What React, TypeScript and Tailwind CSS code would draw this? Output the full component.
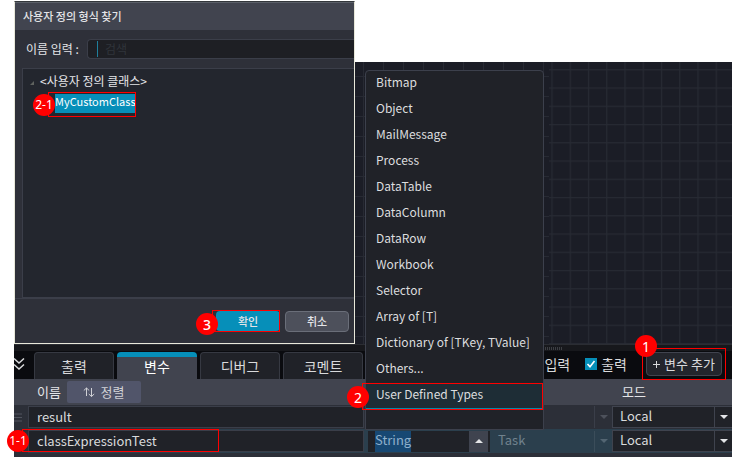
import { ReactNode } from "react";

const typeOptions = [
  "Bitmap",
  "Object",
  "MailMessage",
  "Process",
  "DataTable",
  "DataColumn",
  "DataRow",
  "Workbook",
  "Selector",
  "Array of [T]",
  "Dictionary of [TKey, TValue]",
  "Others...",
];

function Badge({ className, children }: { className: string; children: ReactNode }) {
  return (
    <span
      className={`absolute z-30 flex size-[22px] items-center justify-center rounded-full bg-[#ff0000] font-['Noto_Sans',sans-serif] text-white ${className}`}
    >
      {children}
    </span>
  );
}

function Frame({ className }: { className: string }) {
  return <span className={`pointer-events-none absolute z-20 border border-[#ff0000] ${className}`} />;
}

function CanvasGrid() {
  return (
    <svg className="absolute inset-0 size-full" aria-hidden="true">
      <defs>
        <pattern id="wide" x="8" y="14" width="20" height="20" patternUnits="userSpaceOnUse">
          <path d="M0.5 0V20M0 0.5H20" stroke="#272a33" fill="none" />
        </pattern>
        <pattern id="narrow" x="196.4" y="7.2" width="18.25" height="18.25" patternUnits="userSpaceOnUse">
          <path d="M0.6 0V18.25M0 0.6H18.25" stroke="#272a33" strokeWidth="1.2" fill="none" />
        </pattern>
      </defs>
      <rect width="194" height="100%" fill="url(#wide)" />
      <rect x="194" width="100%" height="100%" fill="url(#narrow)" />
    </svg>
  );
}

function Triangle({ up, className }: { up?: boolean; className: string }) {
  return (
    <svg viewBox="0 0 8 4" className={`h-1 w-2 ${className}`} aria-hidden="true">
      <path d={up ? "M0 4L4 0L8 4Z" : "M0 0H8L4 4Z"} fill="currentColor" />
    </svg>
  );
}

function Dialog() {
  return (
    <section className="mt-px flex h-[343px] w-[341px] shrink-0 flex-col border border-[#e8e8da] border-t-[#33373b] bg-[#2e3039] text-[#e4e5e8]">
      <h2 className="flex h-7 shrink-0 items-center border-t border-[#5b6069] bg-[#41444f] pl-2 text-[11px] font-medium">
        사용자 정의 형식 찾기
      </h2>
      <div className="flex h-[38px] shrink-0 items-center pl-[11px]">
        <label htmlFor="search" className="w-[61px] text-[12px]">
          이름 입력 :
        </label>
        <div className="flex h-5 flex-1 items-center rounded-l-sm border border-r-0 border-[#3b3e49] bg-[#1e1f24] pl-[9px]">
          <span className="h-4 w-px shrink-0 bg-[#1f7f9c]" />
          <input
            id="search"
            placeholder="검색"
            className="h-4 w-full min-w-0 pl-[7px] text-[12px] outline-none placeholder:text-[#30343b]"
          />
        </div>
      </div>
      <div className="ml-[7px] flex-1 border border-r-0 border-[#3b3e49] bg-[#23262e] pt-[3px] pl-[7px]">
        <div className="flex h-[18px] items-center gap-[6px] text-[12px]">
          <svg viewBox="0 0 4 4" className="mt-1 size-1" aria-hidden="true">
            <path d="M4 0V4H0Z" fill="#5f625f" />
          </svg>
          <span>&lt;사용자 정의 클래스&gt;</span>
        </div>
        <div className="relative mt-[2px] ml-[18px] h-[25px] w-[88px] pt-[2px]">
          <button className="ml-[7px] flex h-[19px] w-20 items-center bg-[#068fb9] pb-1 text-[11px] text-white">
            MyCustomClass
          </button>
          <Frame className="inset-0" />
          <Badge className="-left-[15px] top-[2px] text-[12px]">2-1</Badge>
        </div>
      </div>
      <div className="flex h-[45px] shrink-0 items-center justify-end gap-[5px] border-t border-[#3b3e49] pr-[5px] text-[11px] font-medium">
        <div className="relative">
          <button className="block h-5 w-16 rounded-sm bg-[#068fb9] leading-5">확인</button>
          <Frame className="-inset-y-px -left-1 right-0" />
          <Badge className="-left-5 top-[2px] text-[14px]">3</Badge>
        </div>
        <button className="h-[21px] w-16 rounded-sm border border-[#6a6e79] bg-[#4d505b] leading-[18px]">취소</button>
      </div>
    </section>
  );
}

function TypeMenu() {
  return (
    <div className="absolute left-[365px] top-[70px] z-10 h-[360px] w-[179px] rounded-t-sm border border-[#3c404c] bg-[#202228] text-[12px] text-[#dcdddf]">
      <ul>
        {typeOptions.map((name) => (
          <li key={name}>
            <button className="block h-[26px] w-full pb-1 pl-[10px] text-left leading-[22px]">{name}</button>
          </li>
        ))}
        <li className="relative">
          <button className="block h-[26px] w-full border-b border-[#0b86a8] bg-[#1e2d36] pb-[3px] pl-[10px] text-left leading-[22px]">
            User Defined Types
          </button>
          <Frame className="-left-1 right-0 top-0 -bottom-px" />
          <Badge className="-left-[19px] top-[3px] text-[14px]">2</Badge>
        </li>
      </ul>
    </div>
  );
}

function Tab({ label, active }: { label: string; active?: boolean }) {
  return (
    <button
      role="tab"
      aria-selected={!!active}
      className={
        active
          ? "h-[27px] w-20 rounded-t-sm border-t-[5px] border-[#068fb9] bg-[#41444f] pb-1 text-[14px] leading-[18px] text-white"
          : "h-[27px] w-20 rounded-t-sm border border-b-0 border-[#363942] bg-[#202228] text-[14px] leading-6 text-[#d9dadc]"
      }
    >
      {label}
    </button>
  );
}

function TabBar() {
  return (
    <div className="flex h-7 items-end bg-[#0a0b0f] pr-[10px]">
      <div className="flex flex-1 items-end gap-[3px]" role="tablist">
        <button aria-label="접기" className="mb-2 w-[17px]">
          <svg viewBox="0 0 11 14" className="h-[14px] w-[11px] fill-none stroke-[#d9dadc] stroke-[1.5]" aria-hidden="true">
            <path d="M0 1.5L5 6L10 1.5M0 7.5L5 12L10 7.5" />
          </svg>
        </button>
        <Tab label="출력" />
        <Tab label="변수" active />
        <Tab label="디버그" />
        <Tab label="코멘트" />
      </div>
      <div className="flex h-7 items-center pb-[2px] text-[14px] text-[#d9dadc]">
        <label className="mr-[15px] flex items-center gap-1">
          <input type="checkbox" defaultChecked className="size-3 appearance-none bg-[#068fb9]" />
          입력
        </label>
        <label className="flex items-center gap-1">
          <span className="relative flex">
            <input type="checkbox" defaultChecked className="size-3 appearance-none bg-[#068fb9]" />
            <svg viewBox="0 0 12 12" className="pointer-events-none absolute inset-0 size-3 fill-none stroke-white stroke-[1.6]" aria-hidden="true">
              <path d="M2.5 6L5 8.8L9.5 3" />
            </svg>
          </span>
          출력
        </label>
        <div className="relative ml-[19px]">
          <button className="flex h-6 w-[76px] items-center justify-center gap-1 whitespace-nowrap rounded-sm border border-[#41444f] bg-[#23252c] text-[13px]">
            <svg viewBox="0 0 7 7" className="size-[7px] stroke-[#d9dadc]" aria-hidden="true">
              <path d="M3.5 0V7M0 3.5H7" />
            </svg>
            변수 추가
          </button>
          <Frame className="-inset-x-1 -top-1 -bottom-1" />
          <Badge className="-left-[11px] -top-[17px] text-[14px]">1</Badge>
        </div>
      </div>
    </div>
  );
}

function ModeSelect({ label }: { label: string }) {
  return (
    <div className="relative flex h-[22px] items-center border border-r-0 border-[#3f434e] bg-[#202228]">
      <select aria-label={label} className="h-5 w-full appearance-none pb-[2px] pl-[7px] text-[13px] leading-[18px] text-[#d9dadc] outline-none">
        <option>Local</option>
        <option>Global</option>
      </select>
      <span className="pointer-events-none absolute inset-y-0 right-0 flex w-[18px] items-center justify-center border-l border-[#3f434e]">
        <Triangle className="text-[#e4e5e8]" />
      </span>
    </div>
  );
}

function NameInput({ value, label }: { value: string; label: string }) {
  return (
    <input
      aria-label={label}
      defaultValue={value}
      className="block h-[22px] w-full border border-[#3a3e49] bg-[#202228] pb-[2px] pl-2 text-[13px] text-[#d9dadc] outline-none"
    />
  );
}

function VariableTable() {
  return (
    <table className="w-full table-fixed border-collapse bg-[#2c2f38]">
      <colgroup>
        <col className="w-[14px]" />
        <col />
        <col className="w-[124px]" />
        <col className="w-[122px]" />
        <col className="w-[120px]" />
      </colgroup>
      <thead>
        <tr className="h-[26px] bg-[#41444f] text-left text-[13px] text-[#e4e5e8]">
          <th />
          <th className="p-0 pl-[9px] font-normal">
            <div className="flex items-center gap-[6px]">
              이름
              <button className="flex h-[22px] w-[74px] items-center justify-center gap-[5px] rounded-xs bg-[#51556a] text-[#d0d1d6]">
                <svg viewBox="0 0 12 11" className="h-[11px] w-3 fill-none stroke-[#d0d1d6]" aria-hidden="true">
                  <path d="M3.5 9V1M0.8 3.5L3.5 1L6.2 3.5M8.5 1V9.5M5.8 7L8.5 9.5L11.2 7" />
                </svg>
                정렬
              </button>
            </div>
          </th>
          <th />
          <th />
          <th className="p-0 pl-[10px] font-normal">모드</th>
        </tr>
      </thead>
      <tbody>
        <tr className="h-6">
          <td className="p-0">
            <svg viewBox="0 0 8 9" className="h-[9px] w-2 stroke-[#50545e]" aria-hidden="true">
              <path d="M0 1H8M0 4.5H8M0 8H8" />
            </svg>
          </td>
          <td className="p-0 pr-[2px]">
            <NameInput label="변수 이름 1" value="result" />
          </td>
          <td className="p-0">
            <div className="h-[22px] border border-[#3a3e49] bg-[#202228]" />
          </td>
          <td className="p-0">
            <div className="flex h-[22px] justify-end">
              <span className="flex w-[18px] items-center justify-center border-l border-[#3a3e49] text-[#4d515b]">
                <Triangle className="" />
              </span>
            </div>
          </td>
          <td className="p-0">
            <ModeSelect label="모드 1" />
          </td>
        </tr>
        <tr className="h-6 bg-[#2b3f4d]">
          <td className="relative bg-[#2c2f38] p-0">
            <Frame className="left-2 top-0 h-[23px] w-[197px]" />
            <Badge className="-left-[7px] top-[1px] text-[12px]">1-1</Badge>
          </td>
          <td className="p-0 pr-[2px]">
            <NameInput label="변수 이름 2" value="classExpressionTest" />
          </td>
          <td className="p-0 pl-[2px]">
            <button aria-haspopup="listbox" className="flex h-[21px] w-full bg-[#202228] pl-[7px] text-left text-[13px] leading-[18px] text-[#8fb0cc]">
              <span className="h-[21px] bg-[#174873]">String</span>
              <span className="ml-auto mr-[2px] flex h-[21px] w-[19px] items-center justify-center bg-[#3f434f] text-[#e4e5e8]">
                <Triangle up className="" />
              </span>
            </button>
          </td>
          <td className="p-0">
            <button className="flex h-[21px] w-full pl-2 text-[13px] leading-[18px] text-[#71828d]">
              Task
              <span className="ml-auto flex h-[21px] w-[18px] items-center justify-center border-l border-[#3b4d5a] text-[#536572]">
                <Triangle className="" />
              </span>
            </button>
          </td>
          <td className="p-0">
            <ModeSelect label="모드 2" />
          </td>
        </tr>
      </tbody>
    </table>
  );
}

export default function App() {
  return (
    <main className="relative bg-white pl-[14px] font-['Noto_Sans_CJK_KR',sans-serif]">
      <div className="flex">
        <Dialog />
        <div className="relative mt-[62px] flex-1 bg-[#1b1d26]">
          <CanvasGrid />
        </div>
      </div>
      <div className="flex h-[7px] items-center justify-center border-t border-[#2b2d33] bg-[#17181c] pl-[360px]">
        <span className="h-[3px] w-5 bg-[repeating-linear-gradient(90deg,#3c3e43_0_1px,transparent_1px_2px)]" />
      </div>
      <TabBar />
      <VariableTable />
      <div className="h-1 bg-[#2c2f38]" />
      <TypeMenu />
    </main>
  );
}
